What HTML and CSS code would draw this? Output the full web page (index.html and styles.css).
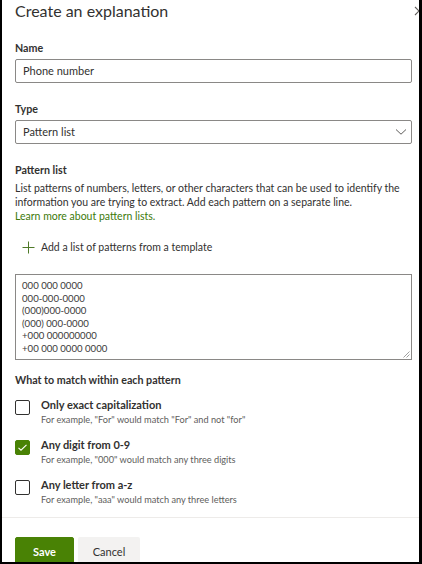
FILE: index.html
```html
<!DOCTYPE html>
<html lang="en">
<head>
<meta charset="utf-8">
<title>Create an explanation</title>
<link rel="stylesheet" href="styles.css">
</head>
<body>
<div class="frame">
  <div class="content">
    <div class="title-row">
      <h1 class="title">Create an explanation</h1>
      <svg class="close" width="10" height="10" viewBox="0 0 10 10"><path d="M1 1 L9 9 M9 1 L1 9" stroke="#605e5c" stroke-width="1.1" fill="none"/></svg>
    </div>

    <div class="field field-name">
      <div class="label">Name</div>
      <div class="input">Phone number</div>
    </div>

    <div class="field field-type">
      <div class="label">Type</div>
      <div class="input select">
        <span>Pattern list</span>
        <svg width="12" height="8" viewBox="0 0 12 8"><path d="M1 1.5 L6 6.2 L11 1.5" stroke="#605e5c" stroke-width="1" fill="none"/></svg>
      </div>
    </div>

    <div class="field field-pattern">
      <div class="label">Pattern list</div>
      <p class="desc">List patterns of numbers, letters, or other characters that can be used to identify the information you are trying to extract. Add each pattern on a separate line.<br><a class="link">Learn more about pattern lists.</a></p>
    </div>

    <div class="add-row">
      <svg width="13" height="13" viewBox="0 0 13 13"><path d="M6.5 0.5 V12.5 M0.5 6.5 H12.5" stroke="#4f7a28" stroke-width="1" fill="none"/></svg>
      <span>Add a list of patterns from a template</span>
    </div>

    <div class="textarea">
      <div>000 000 0000</div>
      <div>000-000-0000</div>
      <div>(000)000-0000</div>
      <div>(000) 000-0000</div>
      <div>+000 000000000</div>
      <div>+00 000 0000 0000</div>
      <svg class="grip" width="7" height="7" viewBox="0 0 7 7"><path d="M6.5 0.5 L0.5 6.5 M6.5 3.5 L3.5 6.5" stroke="#a0a0a0" stroke-width="1" fill="none"/></svg>
    </div>

    <div class="label match-label">What to match within each pattern</div>

    <div class="options">
      <div class="option">
        <span class="box"></span>
        <div class="opt-text">
          <div class="opt-title">Only exact capitalization</div>
          <div class="opt-sub">For example, "For" would match "For" and not "for"</div>
        </div>
      </div>
      <div class="option">
        <span class="box checked"><svg width="11" height="9" viewBox="0 0 11 9"><path d="M1.5 4.8 L4 7.2 L9.5 1.8" stroke="#fff" stroke-width="1.1" fill="none"/></svg></span>
        <div class="opt-text">
          <div class="opt-title">Any digit from 0-9</div>
          <div class="opt-sub">For example, "000" would match any three digits</div>
        </div>
      </div>
      <div class="option">
        <span class="box"></span>
        <div class="opt-text">
          <div class="opt-title">Any letter from a-z</div>
          <div class="opt-sub">For example, "aaa" would match any three letters</div>
        </div>
      </div>
    </div>
  </div>

  <div class="footer">
    <button class="btn primary">Save</button>
    <button class="btn secondary">Cancel</button>
  </div>
</div>
</body>
</html>
```

FILE: styles.css
```css
* { box-sizing: border-box; }
html, body { margin: 0; padding: 0; background: #fff; }
body {
  font-family: "Lato", "Noto Sans", sans-serif;
  color: #323130;
}
.frame {
  width: 422px;
  height: 564px;
  border-left: 2px solid #000;
  border-right: 3px solid #000;
  border-bottom: 2px solid #000;
  overflow: hidden;
  background: #fff;
}
.content {
  padding: 0 7px 0 13px;
}
.title-row {
  display: flex;
  justify-content: space-between;
  align-items: flex-start;
  height: 26px;
}
.title {
  margin: 0;
  font-size: 16px;
  font-weight: 400;
  line-height: 21px;
  color: #323130;
}
.close {
  margin-top: 6px;
  margin-right: -12px;
}
.label {
  font-size: 10.7px;
  font-weight: 700;
  line-height: 17px;
  color: #323130;
}
.field-name { margin-top: 13px; }
.field-type { margin-top: 17px; }
.field-pattern { margin-top: 17px; }
.field .label { margin-bottom: 3px; }
.input {
  height: 24px;
  border: 1px solid #8a8886;
  border-radius: 2px;
  padding: 0 7px;
  font-size: 11px;
  line-height: 22px;
  color: #323130;
}
.select {
  display: flex;
  justify-content: space-between;
  align-items: center;
  padding-right: 4px;
}
.desc {
  margin: 2px 0 0;
  font-size: 10.5px;
  line-height: 14px;
  color: #323130;
}
.link { color: #3d7a0a; }
.add-row {
  display: flex;
  align-items: center;
  gap: 6px;
  margin-top: 16px;
  padding-left: 7px;
  font-size: 10.5px;
  line-height: 16px;
}
.textarea {
  position: relative;
  margin-top: 19px;
  height: 86px;
  border: 1px solid #8a8886;
  padding: 5px 6px;
  font-size: 9.6px;
  line-height: 12.6px;
  color: #3b3a39;
}
.grip {
  position: absolute;
  right: 1px;
  bottom: 1px;
}
.match-label { margin-top: 11px; }
.options {
  display: flex;
  flex-direction: column;
  gap: 10px;
  margin-top: 9px;
}
.option {
  display: flex;
  gap: 11px;
  align-items: flex-start;
}
.box {
  flex: none;
  width: 15px;
  height: 15px;
  margin-top: 3px;
  border: 1px solid #323130;
  border-radius: 2px;
  display: flex;
  align-items: center;
  justify-content: center;
}
.box.checked {
  background: #498205;
  border-color: #498205;
}
.opt-title {
  font-size: 11px;
  font-weight: 700;
  line-height: 15px;
}
.opt-sub {
  font-size: 9.2px;
  line-height: 15px;
  color: #605e5c;
}
.footer {
  margin-top: 10px;
  border-top: 1px solid #edebe9;
  padding: 19px 0 0 13px;
  display: flex;
  gap: 4px;
}
.btn {
  font-family: inherit;
  font-size: 11px;
  font-weight: 700;
  height: 28px;
  border-radius: 2px;
  border: 1px solid transparent;
  padding: 0;
}
.primary {
  width: 59px;
  background: #498205;
  border-color: #498205;
  color: #fff;
}
.secondary {
  width: 62px;
  background: #f3f2f1;
  color: #323130;
  font-weight: 400;
}
```
